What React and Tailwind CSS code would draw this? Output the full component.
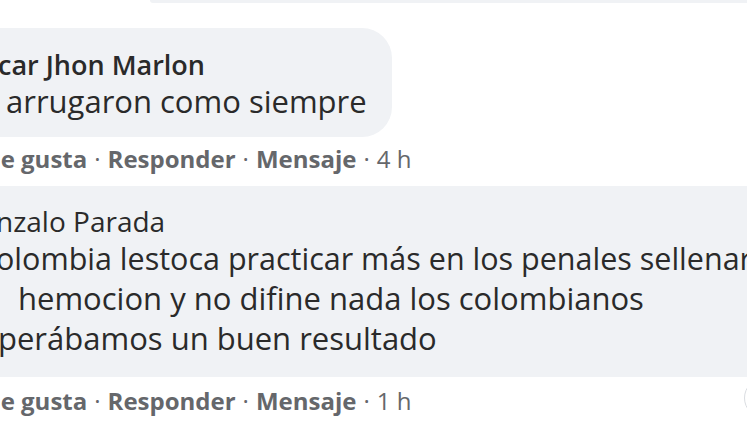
import React from 'react';

function Actions({ time }) {
  return (
    <div className="flex items-center text-[24px] leading-[28px] text-[#65676b] whitespace-nowrap">
      <span className="font-bold -ml-[22px]">Me gusta</span>
      <span className="mx-[7px]">·</span>
      <span className="font-bold">Responder</span>
      <span className="mx-[7px]">·</span>
      <span className="font-bold">Mensaje</span>
      <span className="mx-[7px]">·</span>
      <span>{time}</span>
    </div>
  );
}

export default function App() {
  return (
    <div className="relative w-[747px] h-[427px] overflow-hidden bg-white font-['Open_Sans',sans-serif] text-[#2a2a2a]">
      {/* end of the comment box above */}
      <div className="ml-[150px] h-[3px] bg-[#f0f2f5] rounded-bl-[6px]" />

      <div className="mt-[25px] w-[392px] rounded-r-[30px] bg-[#f0f2f5] pt-[22px] pb-[17px] whitespace-nowrap">
        <div className="text-[27px] leading-[30px] font-semibold -ml-[2px]">car Jhon Marlon</div>
        <div className="mt-[2px] text-[31px] leading-[38px] ml-[6px]">arrugaron como siempre</div>
      </div>

      <div className="mt-[8px]">
        <Actions time="4 h" />
      </div>

      <div className="mt-[13px] h-[191px] bg-[#f0f2f5] pt-[20px] whitespace-nowrap">
        <div className="text-[28px] leading-[30px] -ml-[4px]">nzalo Parada</div>
        <div className="mt-[2px] text-[30.5px] leading-[40px] -ml-[4px]">olombia lestoca practicar más en los penales sellenar</div>
        <div className="text-[31px] leading-[40px] ml-[18px]">hemocion y no difine nada los colombianos</div>
        <div className="text-[31px] leading-[40px] -ml-[2px]">perábamos un buen resultado</div>
      </div>

      <div className="mt-[10px]">
        <Actions time="1 h" />
      </div>

      <div className="absolute left-[744px] top-[378px] w-[40px] h-[40px] rounded-full border border-[#dadde1] bg-white" />
    </div>
  );
}
